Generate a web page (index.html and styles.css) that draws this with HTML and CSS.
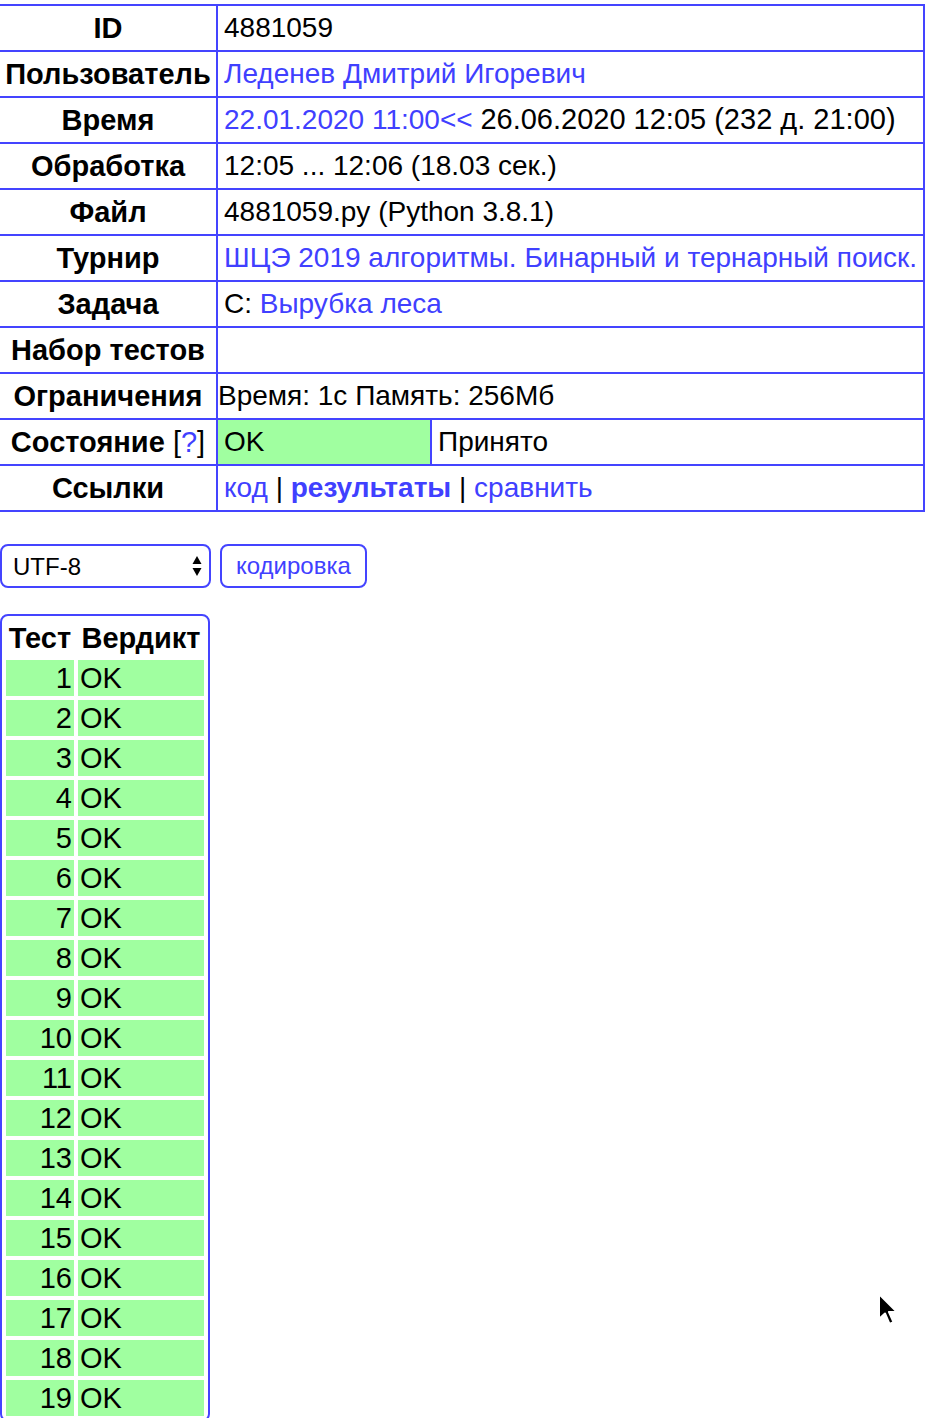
FILE: index.html
```html
<!DOCTYPE html>
<html lang="ru">
<head>
<meta charset="utf-8">
<title>Посылка 4881059</title>
<link rel="stylesheet" href="styles.css">
</head>
<body>
<table class="info">
  <colgroup><col class="c-label"><col class="c-ok"><col class="c-rest"></colgroup>
  <tr><th>ID</th><td colspan="2">4881059</td></tr>
  <tr><th>Пользователь</th><td colspan="2"><a href="#">Леденев Дмитрий Игоревич</a></td></tr>
  <tr><th>Время</th><td colspan="2"><a href="#">22.01.2020 11:00&lt;&lt;</a> <span class="wide">26.06.2020 12:05 (232 д. 21:00)</span></td></tr>
  <tr><th>Обработка</th><td colspan="2">12:05 ... 12:06 (18.03 сек.)</td></tr>
  <tr><th>Файл</th><td colspan="2">4881059.py (Python 3.8.1)</td></tr>
  <tr><th>Турнир</th><td colspan="2"><a href="#">ШЦЭ 2019 алгоритмы. Бинарный и тернарный поиск.</a></td></tr>
  <tr><th>Задача</th><td colspan="2">C: <a href="#">Вырубка леса</a></td></tr>
  <tr><th>Набор тестов</th><td colspan="2"></td></tr>
  <tr><th>Ограничения</th><td colspan="2" class="flush">Время: 1с Память: 256Мб</td></tr>
  <tr><th>Состояние <span class="plain">[<a href="#">?</a>]</span></th><td class="ok">OK</td><td>Принято</td></tr>
  <tr><th>Ссылки</th><td colspan="2"><a href="#">код</a> | <a href="#" class="strong">результаты</a> | <a href="#">сравнить</a></td></tr>
</table>

<form class="enc">
  <div class="select-wrap">
    <select class="select"><option>UTF-8</option><option>Windows-1251</option></select>
    <svg class="arrows" width="10" height="20" viewBox="0 0 10 20"><path d="M5 0 L9.5 8 H0.5 Z M5 20 L9.5 12 H0.5 Z" fill="#000"/></svg>
  </div>
  <button type="button" class="btn">кодировка</button>
</form>

<table class="tests">
  <tr><th class="num">Тест</th><th class="ver">Вердикт</th></tr>
  <tr><td class="num">1</td><td>OK</td></tr>
  <tr><td class="num">2</td><td>OK</td></tr>
  <tr><td class="num">3</td><td>OK</td></tr>
  <tr><td class="num">4</td><td>OK</td></tr>
  <tr><td class="num">5</td><td>OK</td></tr>
  <tr><td class="num">6</td><td>OK</td></tr>
  <tr><td class="num">7</td><td>OK</td></tr>
  <tr><td class="num">8</td><td>OK</td></tr>
  <tr><td class="num">9</td><td>OK</td></tr>
  <tr><td class="num">10</td><td>OK</td></tr>
  <tr><td class="num">11</td><td>OK</td></tr>
  <tr><td class="num">12</td><td>OK</td></tr>
  <tr><td class="num">13</td><td>OK</td></tr>
  <tr><td class="num">14</td><td>OK</td></tr>
  <tr><td class="num">15</td><td>OK</td></tr>
  <tr><td class="num">16</td><td>OK</td></tr>
  <tr><td class="num">17</td><td>OK</td></tr>
  <tr><td class="num">18</td><td>OK</td></tr>
  <tr><td class="num">19</td><td>OK</td></tr>
</table>

<svg class="cursor" width="22" height="34" viewBox="0 0 22 34">
  <path d="M2 1 L2 26 L8 20.5 L12.5 31 L16.5 29.2 L12 19 L20 19 Z" fill="#000" stroke="#fff" stroke-width="2" stroke-linejoin="round"/>
</svg>
</body>
</html>
```

FILE: styles.css
```css
html, body {
  margin: 0;
  padding: 0;
  background: #fff;
}
body {
  padding-top: 4px;
  font-family: "Liberation Sans", Arial, Helvetica, sans-serif;
  font-size: 28px;
  color: #000;
  position: relative;
  min-height: 1418px;
  overflow: hidden;
}
a {
  color: #4040ff;
  text-decoration: none;
}
a.strong {
  font-weight: bold;
}

/* info table */
.info {
  width: 925px;
  table-layout: fixed;
  border-spacing: 0;
  border-top: 2px solid #4444ff;
  border-right: 2px solid #4444ff;
}
.c-label { width: 216px; }
.c-ok { width: 214px; }
.info th, .info td {
  height: 44px;
  line-height: 44px;
  padding: 0;
  border-bottom: 2px solid #4444ff;
  white-space: nowrap;
  overflow: visible;
  box-sizing: content-box;
}
.info th {
  text-align: center;
  font-weight: bold;
  font-size: 29px;
}
.info th .plain {
  font-weight: normal;
}
.info td {
  text-align: left;
  padding-left: 6px;
  border-left: 2px solid #4444ff;
}
.info td.flush {
  padding-left: 0;
}
.info td.ok {
  background: #a0ffa0;
}
.info .wide {
  font-size: 29px;
  line-height: 1;
}

/* encoding form */
.enc {
  margin: 32px 0 0 0;
  display: flex;
  gap: 9px;
  align-items: center;
}
.select-wrap {
  position: relative;
  width: 211px;
  height: 44px;
}
.select {
  appearance: none;
  -webkit-appearance: none;
  width: 211px;
  height: 44px;
  box-sizing: border-box;
  border: 2px solid #4444ff;
  border-radius: 8px;
  background: #fff;
  padding: 0 0 0 11px;
  font-family: "Liberation Sans", Arial, sans-serif;
  font-size: 24px;
  color: #000;
  margin: 0;
}
.arrows {
  position: absolute;
  right: 9px;
  top: 12px;
  pointer-events: none;
}
.btn {
  height: 44px;
  box-sizing: border-box;
  border: 2px solid #4444ff;
  border-radius: 8px;
  background: #fff;
  color: #4040ff;
  font-family: "Liberation Sans", Arial, sans-serif;
  font-size: 24px;
  padding: 0 14px;
  margin: 0;
}

/* tests table */
.tests {
  margin-top: 26px;
  border: 2px solid #4444ff;
  border-radius: 8px;
  border-spacing: 4px;
}
.tests th, .tests td {
  height: 36px;
  line-height: 36px;
  padding: 0 2px;
  box-sizing: border-box;
  font-size: 29px;
}
.tests th {
  font-weight: bold;
  text-align: center;
}
.tests th.num, .tests td.num { width: 68px; }
.tests th.ver { width: 126px; }
.tests td {
  background: #a0ffa0;
  text-align: left;
}
.tests td.num {
  text-align: right;
}

.cursor {
  position: absolute;
  left: 877px;
  top: 1293px;
}
```
